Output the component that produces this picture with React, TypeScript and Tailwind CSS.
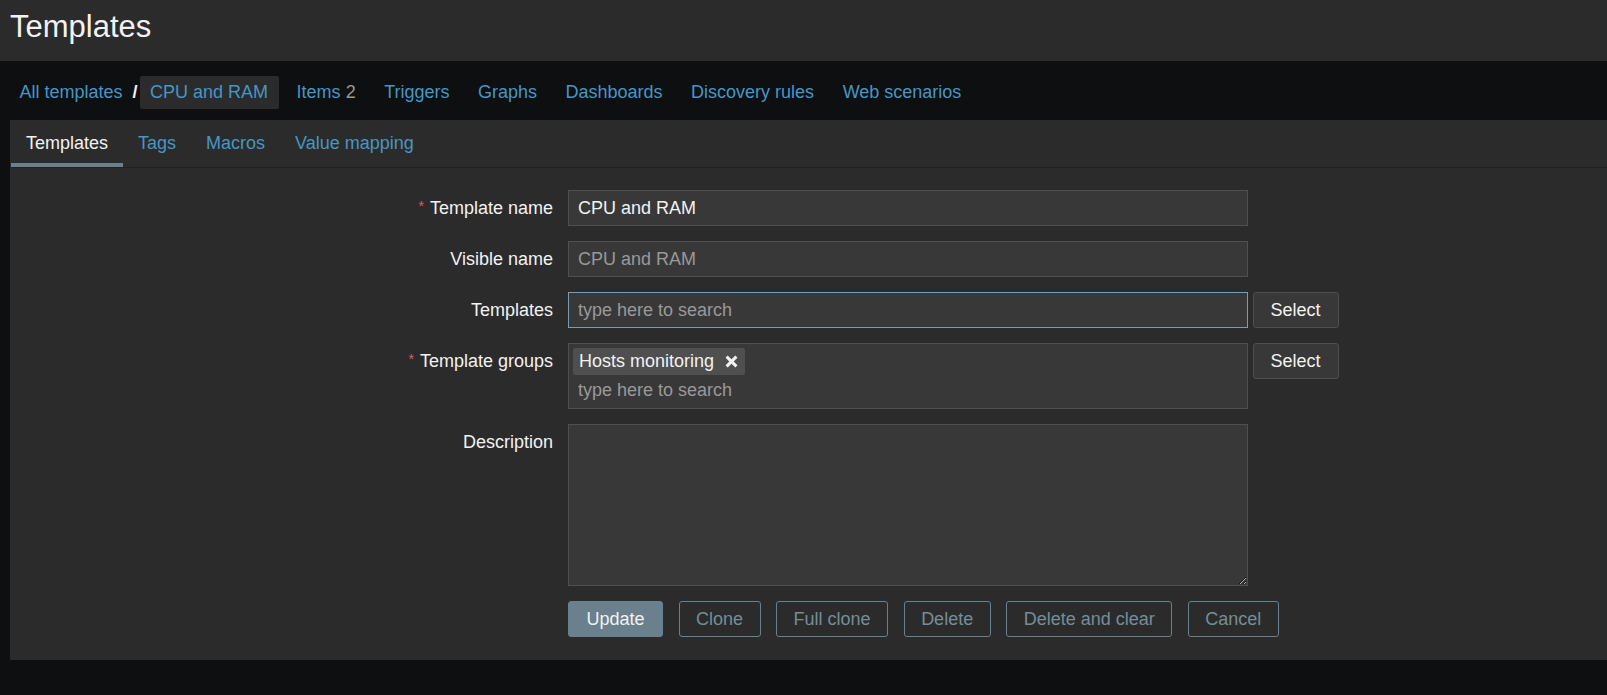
import React from 'react';

const navItems: { label: string; count?: number }[] = [
  { label: 'Items', count: 2 },
  { label: 'Triggers' },
  { label: 'Graphs' },
  { label: 'Dashboards' },
  { label: 'Discovery rules' },
  { label: 'Web scenarios' },
];

const tabs = ['Templates', 'Tags', 'Macros', 'Value mapping'];

const actions = ['Clone', 'Full clone', 'Delete', 'Delete and clear', 'Cancel'];

const inputBase =
  'h-[36px] w-[680px] bg-[#383838] border border-[#4f4f4f] px-[9px] text-[18px] text-[#f2f2f2] placeholder:text-[#999999] outline-none';

const Label: React.FC<{ text: string; required?: boolean }> = ({ text, required }) => (
  <div className="w-[542px] h-[36px] flex items-center justify-end shrink-0 text-[#f2f2f2]">
    {required && <span className="text-[#e45959] text-[14px] mr-[6px] -mt-[4px]">*</span>}
    {text}
  </div>
);

const SelectButton = () => (
  <button className="ml-[4.5px] h-[36px] px-[17px] rounded-[3px] bg-[#383838] border border-[#4f4f4f] text-[#f2f2f2]">
    Select
  </button>
);

export default function App() {
  return (
    <div
      className="min-h-[695px] bg-[#0e0f11] text-[18px] leading-[21px]"
      style={{ fontFamily: '"Liberation Sans", Arial, sans-serif' }}
    >
      {/* Header */}
      <div className="h-[61px] bg-[#2b2b2b] pl-[10px] pt-[9px]">
        <h1 className="text-[31px] leading-[35px] text-[#f2f2f2]">Templates</h1>
      </div>

      {/* Breadcrumbs + sections */}
      <div className="h-[59px] flex items-center pl-[19.5px] pt-[3px]">
        <a className="text-[#4796c4]">All templates</a>
        <span className="text-[#f2f2f2] font-bold ml-[10px] mr-[2px]">/</span>
        <span className="h-[33px] flex items-center px-[10.5px] bg-[#2b2b2b] rounded-[2px] text-[#4796c4]">
          CPU and RAM
        </span>
        <div className="flex items-center gap-[7.5px] ml-[7.5px]">
          {navItems.map((item) => (
            <a key={item.label} className="px-[10.5px] text-[#4796c4]">
              {item.label}
              {item.count !== undefined && <span className="text-[#999999] ml-[5px]">{item.count}</span>}
            </a>
          ))}
        </div>
      </div>

      {/* Panel */}
      <div className="ml-[10px] bg-[#2b2b2b] border-l border-[#2b2b2b] h-[540px]">
        <div className="flex h-[48px] border-b border-[#222222]">
          {tabs.map((t, i) => (
            <div
              key={t}
              className={
                i === 0
                  ? 'h-[47px] flex items-center pt-[4px] px-[15px] border-b-[4px] border-[#6a808c] text-[#f2f2f2]'
                  : 'h-[47px] flex items-center pt-[4px] px-[15px] border-b-[4px] border-transparent text-[#4796c4]'
              }
            >
              {t}
            </div>
          ))}
        </div>

        <div className="pt-[22px] flex flex-col gap-[15px]">
          <div className="flex gap-[15px]">
            <Label text="Template name" required />
            <input className={inputBase} defaultValue="CPU and RAM" readOnly />
          </div>

          <div className="flex gap-[15px]">
            <Label text="Visible name" />
            <input className={inputBase} placeholder="CPU and RAM" readOnly />
          </div>

          <div className="flex gap-[15px]">
            <Label text="Templates" />
            <div className="flex">
              <input
                className="h-[36px] w-[680px] bg-[#383838] border border-[#7b9bb0] px-[9px] text-[18px] text-[#f2f2f2] placeholder:text-[#999999] outline-none"
                placeholder="type here to search"
                readOnly
              />
              <SelectButton />
            </div>
          </div>

          <div className="flex gap-[15px]">
            <Label text="Template groups" required />
            <div className="flex items-start">
              <div className="w-[680px] h-[66px] bg-[#383838] border border-[#4f4f4f] flex flex-col">
                <div className="pt-[3.5px] pl-[4px]">
                  <span className="inline-flex items-center h-[27px] pl-[6px] pr-[7px] rounded-[2px] bg-[#4f4f4f] text-[#f2f2f2]">
                    Hosts monitoring
                    <svg className="ml-[11px]" width="13" height="13" viewBox="0 0 12 12">
                      <path d="M1.5 1.5 L10.5 10.5 M10.5 1.5 L1.5 10.5" stroke="#f2f2f2" strokeWidth="2.8" />
                    </svg>
                  </span>
                </div>
                <input
                  className="h-[32px] px-[9px] bg-transparent text-[18px] text-[#f2f2f2] placeholder:text-[#999999] outline-none"
                  placeholder="type here to search"
                  readOnly
                />
              </div>
              <SelectButton />
            </div>
          </div>

          <div className="flex gap-[15px]">
            <Label text="Description" />
            <textarea
              className="w-[680px] h-[162px] bg-[#383838] border border-[#4f4f4f] px-[9px] py-[6px] text-[18px] text-[#f2f2f2] outline-none [color-scheme:dark]"
              readOnly
            />
          </div>

          <div className="flex gap-[15px]">
            <div className="w-[542px] shrink-0" />
            <div className="flex gap-[15.5px]">
              <button className="h-[36px] px-[17.5px] rounded-[3px] bg-[#6a808c] border border-[#6a808c] text-[#f2f2f2]">
                Update
              </button>
              {actions.map((a) => (
                <button
                  key={a}
                  className="h-[36px] px-[16.5px] rounded-[3px] bg-transparent border border-[#6a808c] text-[#768d99]"
                >
                  {a}
                </button>
              ))}
            </div>
          </div>
        </div>
      </div>
    </div>
  );
}
